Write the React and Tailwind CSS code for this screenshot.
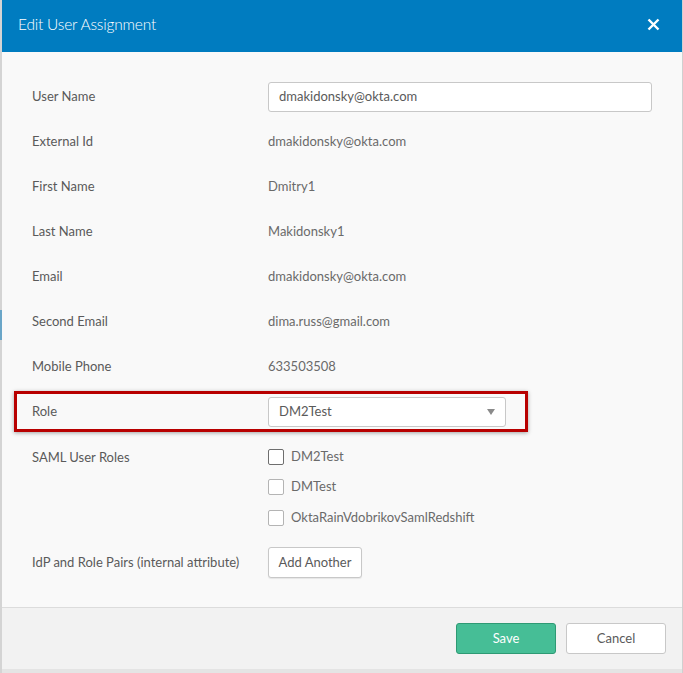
import React from 'react';

const rows = [
  { label: 'External Id', value: 'dmakidonsky@okta.com' },
  { label: 'First Name', value: 'Dmitry1' },
  { label: 'Last Name', value: 'Makidonsky1' },
  { label: 'Email', value: 'dmakidonsky@okta.com' },
  { label: 'Second Email', value: 'dima.russ@gmail.com' },
  { label: 'Mobile Phone', value: '633503508' },
];

const roles = ['DM2Test', 'DMTest', 'OktaRainVdobrikovSamlRedshift'];

export default function App() {
  return (
    <div className="flex h-[673px] w-[683px] bg-[#e4e4e4] font-['Lato','Liberation_Sans',sans-serif] text-[13px]">
      {/* page peeking behind the modal */}
      <div className="flex w-[2px] flex-col bg-[#d4d4d4]">
        <div className="h-[310px]" />
        <div className="h-[30px] bg-[#6aa6c8]" />
      </div>

      <div className="flex h-[669px] w-[680px] flex-col bg-[#f9f9f9]">
        <div className="flex h-[52px] items-center justify-between bg-[#007cc0] pb-[3px] pl-[16px] pr-[22px] text-white">
          <h1 className="text-[15.5px] font-light tracking-[-0.2px]">Edit User Assignment</h1>
          <svg width="13" height="13" viewBox="0 0 13 13">
            <path d="M1.5 1.5 L11.5 11.5 M11.5 1.5 L1.5 11.5" stroke="white" strokeWidth="2.4" />
          </svg>
        </div>

        <div className="flex flex-1 flex-col px-[30px] pt-[30px]">
          <div className="flex h-[30px] items-center">
            <div className="w-[236px] text-[#5a5a5a]">User Name</div>
            <div className="flex h-[30px] w-[384px] items-center rounded-[3px] border border-[#c8c8c8] bg-white px-[10px] text-[#5a5a5a]">
              dmakidonsky@okta.com
            </div>
          </div>

          {rows.map((r) => (
            <div key={r.label} className="mt-[15px] flex h-[30px] items-center">
              <div className="w-[236px] text-[#5a5a5a]">{r.label}</div>
              <div className="text-[#6a6a6a]">{r.value}</div>
            </div>
          ))}

          <div className="-mx-[18px] mt-[9px] flex h-[41px] w-[514px] items-center border-[3px] border-[#b80000] pl-[15px] shadow-[0_1px_4px_rgba(0,0,0,0.35)]">
            <div className="w-[236px] text-[#5a5a5a]">Role</div>
            <div className="flex h-[30px] w-[238px] items-center justify-between rounded-[3px] border border-[#c8c8c8] bg-white pl-[10px] pr-[10px] text-[#5a5a5a]">
              <span>DM2Test</span>
              <svg width="8" height="6" viewBox="0 0 8 6">
                <path d="M0 0 L8 0 L4 6 Z" fill="#8a8a8a" />
              </svg>
            </div>
          </div>

          <div className="mt-[16px] flex">
            <div className="w-[236px] text-[#5a5a5a]">SAML User Roles</div>
            <div className="flex flex-col gap-[13.5px]">
              {roles.map((role, i) => (
                <label key={role} className="flex h-[17px] items-center gap-[7px] text-[#6a6a6a]">
                  <span
                    className={`h-[16px] w-[16px] rounded-[2px] border bg-white ${i === 0 ? 'border-[#6e6e6e]' : 'border-[#b4b4b4]'}`}
                  />
                  {role}
                </label>
              ))}
            </div>
          </div>

          <div className="mt-[21px] flex h-[31px] items-center">
            <div className="w-[236px] text-[#5a5a5a]">IdP and Role Pairs (internal attribute)</div>
            <button className="h-[31px] w-[94px] rounded-[3px] border border-[#c8c8c8] bg-white text-[#5a5a5a] shadow-[0_1px_1px_rgba(0,0,0,0.08)]">
              Add Another
            </button>
          </div>
        </div>

        <div className="flex h-[62px] items-center justify-end gap-[10px] border-t border-[#dcdcdc] bg-[#f2f2f2] pr-[16px]">
          <button className="h-[31px] w-[100px] rounded-[3px] border border-[#2e9a74] bg-[#46be96] text-white">
            Save
          </button>
          <button className="h-[31px] w-[100px] rounded-[3px] border border-[#c8c8c8] bg-white text-[#5a5a5a]">
            Cancel
          </button>
        </div>
      </div>
      <div className="w-[1px] bg-[#d0d0d0]" />
    </div>
  );
}
